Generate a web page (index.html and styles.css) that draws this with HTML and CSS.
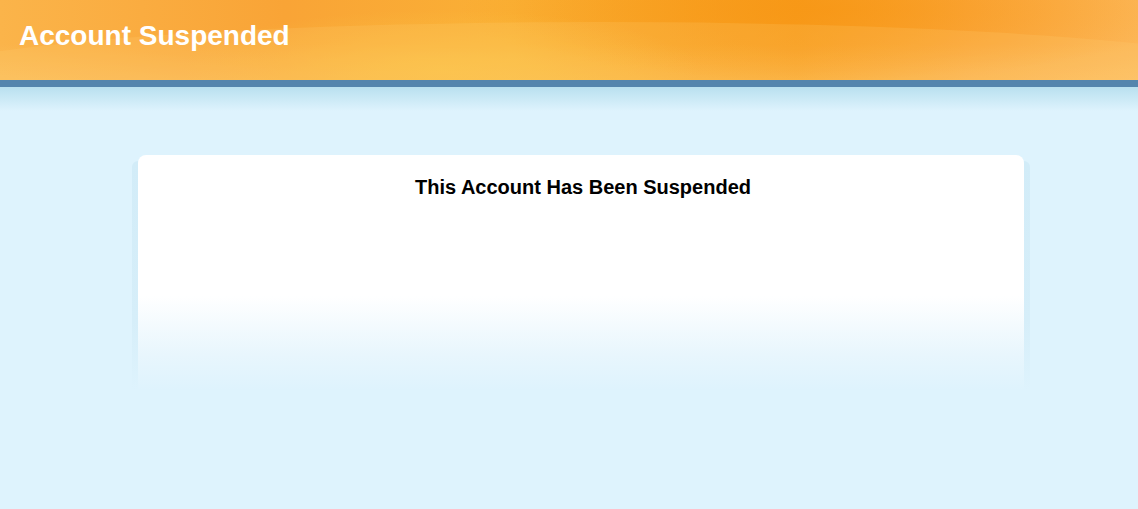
FILE: index.html
```html
<!DOCTYPE html>
<html>

<head>
    <meta http-equiv="content-type" content="text/html; charset=utf-8" />
    <title>Account Suspended</title>
    <link rel="stylesheet" href="styles.css">
</head>

<body>
    <header class="topbar">
        <h1 class="topbar-title">Account Suspended</h1>
    </header>
    <div class="topbar-line"></div>
    <div class="topbar-fade"></div>

    <main class="content">
        <div class="card">
            <h2 class="card-title">This Account Has Been Suspended</h2>
        </div>
    </main>
</body>

</html>
```

FILE: styles.css
```css
html,
body {
    margin: 0;
    padding: 0;
}

body {
    background: #def3fd;
    font-family: "Liberation Sans", Arial, sans-serif;
    min-height: 509px;
}

/* Header */
.topbar {
    position: relative;
    height: 80px;
    overflow: hidden;
    background:
        radial-gradient(ellipse 260px 60px at 440px 70px, rgba(252, 196, 70, 0.75), rgba(252, 196, 70, 0) 100%),
        radial-gradient(ellipse 360px 70px at 820px 10px, rgba(247, 150, 20, 0.7), rgba(247, 150, 20, 0) 100%),
        linear-gradient(180deg, rgba(255, 255, 255, 0) 55%, rgba(255, 220, 140, 0.25) 100%),
        linear-gradient(90deg, #fbb44a 0%, #f9a436 25%, #fab035 45%, #f89c1c 70%, #fba940 85%, #fcb656 100%);
}

.topbar::before {
    content: "";
    position: absolute;
    left: -100px;
    top: 22px;
    width: 1400px;
    height: 120px;
    border-radius: 50%;
    background: rgba(255, 210, 120, 0.18);
}

.topbar-title {
    position: relative;
    margin: 0;
    padding: 19px 0 0 19px;
    color: #fff;
    font-size: 28px;
    font-weight: bold;
    line-height: 34px;
}

.topbar-line {
    height: 7px;
    background: #5585ad;
}

.topbar-fade {
    height: 24px;
    background: linear-gradient(180deg, #b9e0ef 0%, #def3fd 100%);
}

/* Content */
.content {
    padding: 44px 114px 0 138px;
}

.card {
    position: relative;
    height: 235px;
    border-radius: 8px 8px 0 0;
    background: linear-gradient(180deg, #fff 0%, #fff 60%, #e8f6fd 85%, #def3fd 100%);
}

/* soft side edges, fading out with the card */
.card::before,
.card::after {
    content: "";
    position: absolute;
    top: 6px;
    bottom: 0;
    width: 6px;
    background: linear-gradient(180deg, #d2ecf8 0%, #d6eef9 70%, rgba(222, 243, 253, 0) 100%);
}

.card::before {
    left: -6px;
    border-radius: 6px 0 0 0;
}

.card::after {
    right: -6px;
    border-radius: 0 6px 0 0;
}

.card-title {
    margin: 0;
    padding: 20px 0 0 4px;
    text-align: center;
    font-size: 20px;
    font-weight: bold;
    color: #000;
    line-height: 24px;
}
```
